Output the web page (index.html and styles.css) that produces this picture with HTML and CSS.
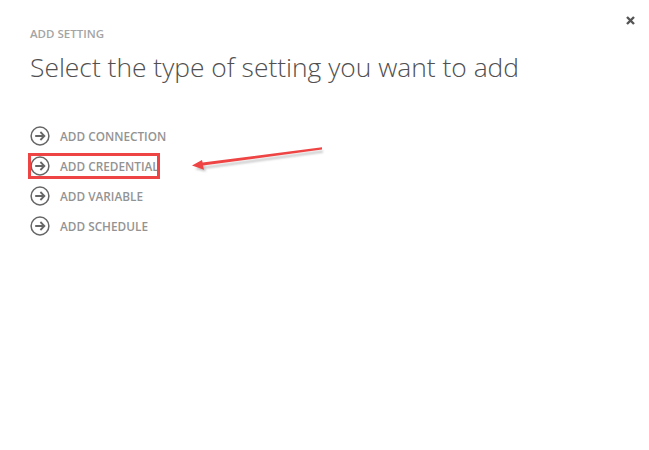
FILE: index.html
```html
<!DOCTYPE html>
<html lang="en">
<head>
<meta charset="utf-8">
<title>Add setting</title>
<link rel="stylesheet" href="styles.css">
</head>
<body>
<main class="dialog">
  <button class="close" aria-label="Close">
    <svg width="9" height="9" viewBox="0 0 9 9"><path d="M1 1L8 8M8 1L1 8" stroke="#555" stroke-width="2.4" fill="none"/></svg>
  </button>
  <p class="eyebrow">ADD SETTING</p>
  <h1 class="title">Select the type of setting you want to add</h1>
  <ul class="options">
    <li class="option">
      <svg class="option-icon" viewBox="0 0 20 20"><circle cx="10" cy="10" r="8.9" fill="none" stroke="#666" stroke-width="1.5"/><path d="M5.2 10H14.2M10.4 6L14.4 10L10.4 14" fill="none" stroke="#666" stroke-width="1.8"/></svg>
      <span>ADD CONNECTION</span>
    </li>
    <li class="option">
      <svg class="option-icon" viewBox="0 0 20 20"><circle cx="10" cy="10" r="8.9" fill="none" stroke="#666" stroke-width="1.5"/><path d="M5.2 10H14.2M10.4 6L14.4 10L10.4 14" fill="none" stroke="#666" stroke-width="1.8"/></svg>
      <span>ADD CREDENTIAL</span>
    </li>
    <li class="option">
      <svg class="option-icon" viewBox="0 0 20 20"><circle cx="10" cy="10" r="8.9" fill="none" stroke="#666" stroke-width="1.5"/><path d="M5.2 10H14.2M10.4 6L14.4 10L10.4 14" fill="none" stroke="#666" stroke-width="1.8"/></svg>
      <span>ADD VARIABLE</span>
    </li>
    <li class="option">
      <svg class="option-icon" viewBox="0 0 20 20"><circle cx="10" cy="10" r="8.9" fill="none" stroke="#666" stroke-width="1.5"/><path d="M5.2 10H14.2M10.4 6L14.4 10L10.4 14" fill="none" stroke="#666" stroke-width="1.8"/></svg>
      <span>ADD SCHEDULE</span>
    </li>
  </ul>
  <div class="callout-box"></div>
  <svg class="callout-arrow" width="649" height="450" viewBox="0 0 649 450">
    <path class="callout-shadow" d="M322 151L204 167L205 170L194 167.5L203 163L204 165L322 149Z"/>
    <path class="callout-head" d="M322 149.5L203 165.6L204 169.8L192 165.5L202 160L202.6 162.6L322 147.2Z"/>
  </svg>
</main>
</body>
</html>
```
FILE: styles.css
```css
html, body {
  margin: 0;
  padding: 0;
  background: #fff;
}
.dialog {
  position: relative;
  width: 649px;
  height: 450px;
  box-sizing: border-box;
  padding: 26px 30px 0;
  overflow: hidden;
  font-family: "Open Sans", "Liberation Sans", sans-serif;
}
.close {
  position: absolute;
  top: 16px;
  right: 14px;
  width: 9px;
  height: 9px;
  padding: 0;
  border: 0;
  background: none;
  display: flex;
}
.eyebrow {
  margin: 0;
  font-size: 11.5px;
  line-height: 15px;
  font-weight: 600;
  color: #a4a4a4;
}
.title {
  margin: 8px 0 0;
  font-size: 26.4px;
  line-height: 36px;
  font-weight: 300;
  color: #505050;
}
.options {
  list-style: none;
  margin: 41px 0 0;
  padding: 0;
  display: flex;
  flex-direction: column;
  gap: 10px;
}
.option {
  display: flex;
  align-items: center;
  gap: 10px;
  height: 20px;
  font-size: 11.8px;
  font-weight: 600;
  color: #939393;
}
.option-icon {
  width: 20px;
  height: 20px;
  flex: none;
}
.callout-box {
  position: absolute;
  left: 28px;
  top: 153px;
  width: 132px;
  height: 26px;
  box-sizing: border-box;
  border: 3px solid #ee4444;
}
.callout-arrow {
  position: absolute;
  left: 0;
  top: 0;
}
.callout-head {
  fill: #ee4444;
}
.callout-shadow {
  fill: #777;
  opacity: 0.45;
  filter: blur(1px);
  transform: translate(1px, 1.5px);
}
```
